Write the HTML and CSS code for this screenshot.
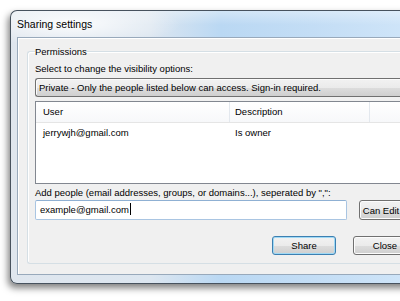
FILE: index.html
```html
<!DOCTYPE html>
<html lang="en">
<head>
  <meta charset="UTF-8">
  <title>Sharing settings</title>
  <link rel="stylesheet" href="styles.css">
</head>
<body>

  <div class="window">
    <div class="titlebar">Sharing settings</div>
    <div class="client">
      <fieldset class="group">
        <legend>Permissions</legend>
        <div class="label">Select to change the visibility options:</div>
        <div class="combo">Private - Only the people listed below can access. Sign-in required.</div>

        <div class="list">
          <div class="list-head">
            <div class="col-user">User</div>
            <div class="col-desc">Description</div>
            <div class="col-rest"></div>
          </div>
          <div class="list-row">
            <div class="col-user">jerrywjh@gmail.com</div>
            <div class="col-desc">Is owner</div>
          </div>
        </div>

        <div class="label label-add">Add people (email addresses, groups, or domains...), seperated by ",":</div>
        <div class="add-row">
          <div class="textbox">example@gmail.com<span class="caret"></span></div>
          <button class="btn btn-narrow">Can Edit</button>
        </div>

        <div class="actions">
          <button class="btn btn-default">Share</button>
          <button class="btn">Close</button>
        </div>
      </fieldset>
    </div>
  </div>

</body>
</html>
```

FILE: styles.css
```css
html, body {
  margin: 0;
  height: 301px;
  overflow: hidden;
  background: #ffffff;
}
body {
  padding: 10px 0 0 10px;
  box-sizing: border-box;
  font-family: "Liberation Sans", Arial, sans-serif;
  font-size: 9.5px;
  color: #000;
}
.window {
  width: 440px;
  height: 274px;
  box-sizing: border-box;
  border: 1px solid #47525e;
  border-right: none;
  border-radius: 7px 0 0 7px;
  padding: 0 0 8px 6px;
  display: flex;
  flex-direction: column;
  background:
    radial-gradient(ellipse 110px 22px at 60px 13px, rgba(255,255,255,0.9), rgba(255,255,255,0)),
    linear-gradient(to bottom, rgba(255,255,255,0.35), rgba(255,255,255,0) 14px),
    linear-gradient(to right, #dfe6ee 0, #dce6f0 140px, #bad8f3 210px, #c3ddf5 300px, #d4e8fa 100%);
  box-shadow: -2px 4px 7px rgba(0,0,0,0.5);
}
.titlebar {
  height: 26px;
  line-height: 26px;
  font-size: 10.5px;
}
.client {
  flex: 1;
  background: #f0f0f0;
  border: 1px solid #98a9bb;
  border-right: none;
  box-shadow: inset 1px 1px 0 #ffffff;
  padding: 7px 0 0 9px;
}
.group {
  margin: 0;
  height: 219px;
  box-sizing: border-box;
  border: 1px solid #d5dfe5;
  border-right: none;
  border-radius: 3px 0 0 3px;
  box-shadow: inset 1px 1px 0 #ffffff;
  padding: 0 0 0 7px;
  min-width: 0;
}
.group legend {
  padding: 0;
  line-height: 13px;
}
.label {
  line-height: 13px;
  margin-top: 4px;
}
.label-add {
  margin-top: 2px;
}
.combo {
  margin-top: 3px;
  height: 19px;
  box-sizing: border-box;
  line-height: 17px;
  padding-left: 3px;
  border: 1px solid #707070;
  border-right: none;
  border-radius: 3px 0 0 3px;
  background: linear-gradient(to bottom, #f2f2f2 0%, #ebebeb 50%, #dddddd 51%, #cfcfcf 100%);
  box-shadow: inset 1px 1px 0 #fbfbfb;
  white-space: nowrap;
}
.list {
  margin-top: 4px;
  height: 83px;
  box-sizing: border-box;
  border: 1px solid #828790;
  border-right: none;
  background: #ffffff;
}
.list-head {
  display: flex;
  height: 20px;
  line-height: 19px;
  border-bottom: 1px solid #e5e5e5;
  background: linear-gradient(to bottom, #ffffff, #f7f8fa);
}
.list-head .col-user,
.list-head .col-desc {
  border-right: 1px solid #e3e8ee;
}
.list-row {
  display: flex;
  line-height: 18px;
  margin-top: 1px;
}
.col-user {
  width: 194px;
  box-sizing: border-box;
  padding-left: 7px;
}
.col-desc {
  width: 140px;
  box-sizing: border-box;
  padding-left: 5px;
}
.col-rest {
  flex: 1;
}
.add-row {
  display: flex;
  gap: 12px;
  margin-top: 1px;
}
.textbox {
  width: 312px;
  height: 20px;
  box-sizing: border-box;
  border: 1px solid #a9c5e2;
  border-top-color: #8fb0d3;
  border-radius: 2px;
  background: #ffffff;
  line-height: 18px;
  padding-left: 4px;
}
.caret {
  display: inline-block;
  width: 1px;
  height: 12px;
  background: #000;
  vertical-align: -2px;
  margin-left: 1px;
}
.btn {
  flex: none;
  width: 64px;
  height: 19px;
  box-sizing: border-box;
  padding: 0;
  font-family: inherit;
  font-size: 9.5px;
  color: #000;
  border: 1px solid #707070;
  border-radius: 3px;
  background: linear-gradient(to bottom, #f2f2f2 0%, #ebebeb 50%, #dddddd 51%, #cfcfcf 100%);
  box-shadow: inset 0 0 0 1px #fcfcfc;
}
.btn-narrow {
  width: 44px;
  height: 20px;
}
.btn-default {
  border-color: #3c7fb1;
  box-shadow: inset 0 0 0 1px #9fd9f5;
}
.actions {
  display: flex;
  gap: 17px;
  margin-top: 16px;
  padding-left: 237px;
}
```
